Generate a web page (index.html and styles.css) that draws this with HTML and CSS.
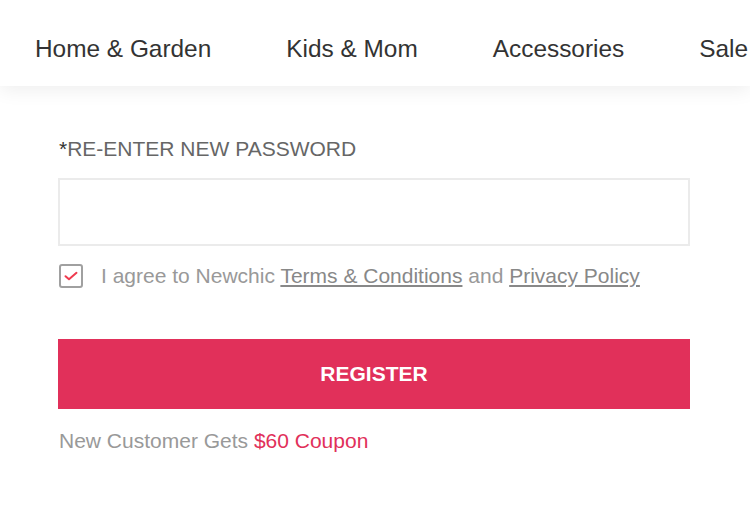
FILE: index.html
```html
<!DOCTYPE html>
<html>
<head>
<meta charset="utf-8">
<link rel="stylesheet" href="styles.css">
</head>
<body>
<header class="nav">
  <a class="nav-item">Home &amp; Garden</a>
  <a class="nav-item">Kids &amp; Mom</a>
  <a class="nav-item">Accessories</a>
  <a class="nav-item">Sale</a>
</header>
<main class="form">
  <label class="label"><span class="star">*</span>RE-ENTER NEW PASSWORD</label>
  <input class="input" type="password">
  <div class="agree">
    <span class="checkbox">
      <svg width="14" height="10" viewBox="0 0 14 10"><path d="M1.5 5.2 L5 8.3 L12.5 1.8" fill="none" stroke="#ef3b4f" stroke-width="2" stroke-linecap="round" stroke-linejoin="round"/></svg>
    </span>
    <span class="agree-text">I agree to Newchic <a class="link">Terms &amp; Conditions</a> and <a class="link">Privacy Policy</a></span>
  </div>
  <button class="register">REGISTER</button>
  <p class="coupon">New Customer Gets <span class="red">$60 Coupon</span></p>
</main>
</body>
</html>
```
FILE: styles.css
```css
body {
  margin: 0;
  background: #fff;
  font-family: "Liberation Sans", Arial, sans-serif;
  overflow: hidden;
}
.nav {
  height: 86px;
  box-sizing: border-box;
  padding: 12px 0 0 35px;
  display: flex;
  align-items: center;
  gap: 75px;
  white-space: nowrap;
  background: #fff;
  box-shadow: 0 4px 18px rgba(0, 0, 0, 0.07);
  position: relative;
}
.nav-item {
  font-size: 24.4px;
  color: #333;
  text-decoration: none;
}
.form {
  width: 632px;
  padding: 51px 0 0 58px;
  display: flex;
  flex-direction: column;
}
.label {
  font-size: 21px;
  line-height: 24px;
  color: #666;
  padding-left: 1px;
}
.star {
  color: #333;
}
.input {
  margin: 17px 0 0;
  height: 68px;
  box-sizing: border-box;
  border: 2px solid #ebebeb;
  outline: none;
  padding: 0 14px;
  font-size: 20px;
}
.agree {
  margin-top: 18px;
  display: flex;
  align-items: center;
  gap: 18px;
  height: 24px;
}
.checkbox {
  width: 24px;
  height: 24px;
  box-sizing: border-box;
  border: 2px solid #a0a0a0;
  border-radius: 3px;
  display: flex;
  align-items: center;
  justify-content: center;
  margin-left: 1px;
}
.agree-text {
  font-size: 21px;
  color: #999;
  white-space: nowrap;
}
.link {
  color: #888;
  text-decoration: underline;
}
.register {
  margin-top: 51px;
  height: 70px;
  border: none;
  background: #e1305a;
  color: #fff;
  font-family: "Liberation Sans", Arial, sans-serif;
  font-weight: bold;
  font-size: 21px;
}
.coupon {
  margin: 20px 0 0;
  font-size: 21px;
  line-height: 24px;
  color: #999;
  padding-left: 1px;
}
.red {
  color: #e1305a;
}
```
